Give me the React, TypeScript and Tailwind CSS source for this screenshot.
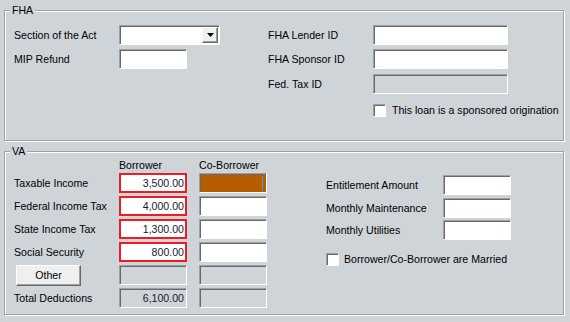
import React from "react";

const sunken =
  "h-[20px] border border-t-[#a0a0a0] border-l-[#a0a0a0] border-r-white border-b-white shadow-[inset_1px_1px_0_#696969]";

function WhiteField({ w }: { w: string }) {
  return <div className={`${sunken} bg-white ${w}`} />;
}

function DisabledField({ w, value }: { w: string; value?: string }) {
  return (
    <div
      className={`${sunken} bg-[#cfd4d8] ${w} flex items-center justify-end pr-[2px] text-[10.6px] leading-[13px] text-[#1a1a2e]`}
    >
      {value}
    </div>
  );
}

function RedField({ value }: { value: string }) {
  return (
    <div className="h-[20px] w-[68px] bg-white border-2 border-[#ed1c24] flex items-center justify-end pr-[1px] text-[10.6px] leading-[13px] text-[#1a1a2e]">
      {value}
    </div>
  );
}

function Checkbox() {
  return (
    <div className="w-[13px] h-[13px] bg-white border border-t-[#a0a0a0] border-l-[#a0a0a0] border-r-white border-b-white shadow-[inset_1px_1px_0_#696969]" />
  );
}

function Label({ w, children }: { w: string; children: React.ReactNode }) {
  return <div className={`${w} text-[10.6px] leading-[13px] text-black whitespace-nowrap`}>{children}</div>;
}

function GroupBox({
  title,
  h,
  children,
}: {
  title: string;
  h: string;
  children: React.ReactNode;
}) {
  return (
    <div className="relative w-[560px] border border-[#a0a0a0] shadow-[1px_1px_0_#ffffff]">
      <div className={`border-l border-t border-white ${h}`}>{children}</div>
      <span className="absolute left-[5px] top-[-7px] px-[2px] bg-[#cfd4d8] text-[10.6px] leading-[13px] text-black">
        {title}
      </span>
    </div>
  );
}

export default function App() {
  return (
    <div
      className="w-[570px] h-[322px] bg-[#cfd4d8] pt-[10px] pl-[4px] overflow-hidden"
      style={{ fontFamily: '"Liberation Sans", Arial, sans-serif' }}
    >
      <GroupBox title="FHA" h="h-[129px]">
        <div className="flex pl-[8px] pt-[13px]">
          {/* left column */}
          <div className="w-[254px] shrink-0 flex flex-col">
            <div className="flex items-center h-[20px]">
              <Label w="w-[105px]">Section of the Act</Label>
              <div className={`${sunken} bg-white w-[101px] flex items-center justify-end pr-[1px]`}>
                <div className="w-[16px] h-[16px] bg-[#f0f0f0] border border-t-white border-l-white border-r-[#696969] border-b-[#696969] shadow-[inset_-1px_-1px_0_#a0a0a0] flex items-center justify-center">
                  <svg width="7" height="4" viewBox="0 0 7 4">
                    <polygon points="0,0 7,0 3.5,4" fill="#000" />
                  </svg>
                </div>
              </div>
            </div>
            <div className="flex items-center h-[20px] mt-[4px]">
              <Label w="w-[105px]">MIP Refund</Label>
              <WhiteField w="w-[68px]" />
            </div>
          </div>
          {/* right column */}
          <div className="flex flex-col">
            <div className="flex items-center h-[20px]">
              <Label w="w-[105px]">FHA Lender ID</Label>
              <WhiteField w="w-[135px]" />
            </div>
            <div className="flex items-center h-[20px] mt-[4px]">
              <Label w="w-[105px]">FHA Sponsor ID</Label>
              <WhiteField w="w-[135px]" />
            </div>
            <div className="flex items-center h-[20px] mt-[5px]">
              <Label w="w-[105px]">Fed. Tax ID</Label>
              <DisabledField w="w-[135px]" />
            </div>
            <div className="flex items-center h-[13px] mt-[10px] pl-[105px]">
              <Checkbox />
              <span className="ml-[6px] text-[10.6px] leading-[13px] text-black whitespace-nowrap">
                This loan is a sponsored origination
              </span>
            </div>
          </div>
        </div>
      </GroupBox>

      <div className="mt-[10px]">
        <GroupBox title="VA" h="h-[162px]">
          <div className="flex pl-[8px] pt-[5px]">
            {/* left block */}
            <div className="flex flex-col w-[253px] shrink-0">
              <div className="flex items-center h-[14px] text-[10.6px] leading-[13px] text-black">
                <div className="w-[105px]" />
                <div className="w-[80px]">Borrower</div>
                <div>Co-Borrower</div>
              </div>
              <div className="flex flex-col gap-[3px] mt-[1px]">
                <div className="flex items-center h-[20px]">
                  <Label w="w-[105px]">Taxable Income</Label>
                  <RedField value="3,500.00" />
                  <div className={`${sunken} bg-[#b85c00] w-[68px] ml-[12px] flex items-center justify-end pr-[3px]`}>
                    <div className="w-[1px] h-[15px] bg-[#4a9be8]" />
                  </div>
                </div>
                <div className="flex items-center h-[20px]">
                  <Label w="w-[105px]">Federal Income Tax</Label>
                  <RedField value="4,000.00" />
                  <div className="ml-[12px]">
                    <WhiteField w="w-[68px]" />
                  </div>
                </div>
                <div className="flex items-center h-[20px]">
                  <Label w="w-[105px]">State Income Tax</Label>
                  <RedField value="1,300.00" />
                  <div className="ml-[12px]">
                    <WhiteField w="w-[68px]" />
                  </div>
                </div>
                <div className="flex items-center h-[20px]">
                  <Label w="w-[105px]">Social Security</Label>
                  <RedField value="800.00" />
                  <div className="ml-[12px]">
                    <WhiteField w="w-[68px]" />
                  </div>
                </div>
                <div className="flex items-center h-[20px]">
                  <div className="w-[105px] flex">
                    <button className="ml-[2px] w-[65px] h-[21px] bg-[#efefef] border border-t-white border-l-white border-r-[#696969] border-b-[#696969] shadow-[inset_-1px_-1px_0_#a0a0a0] text-[10.6px] leading-[13px] text-black flex items-center justify-center">
                      Other
                    </button>
                  </div>
                  <DisabledField w="w-[68px]" />
                  <div className="ml-[12px]">
                    <DisabledField w="w-[68px]" />
                  </div>
                </div>
                <div className="flex items-center h-[20px]">
                  <Label w="w-[105px]">Total Deductions</Label>
                  <DisabledField w="w-[68px]" value="6,100.00" />
                  <div className="ml-[12px]">
                    <DisabledField w="w-[68px]" />
                  </div>
                </div>
              </div>
            </div>
            {/* right block */}
            <div className="flex flex-col ml-[59px] pt-[17px]">
              <div className="flex items-center h-[20px]">
                <Label w="w-[117px]">Entitlement Amount</Label>
                <WhiteField w="w-[68px]" />
              </div>
              <div className="flex items-center h-[20px] mt-[3px]">
                <Label w="w-[117px]">Monthly Maintenance</Label>
                <WhiteField w="w-[68px]" />
              </div>
              <div className="flex items-center h-[20px] mt-[2px]">
                <Label w="w-[117px]">Monthly Utilities</Label>
                <WhiteField w="w-[68px]" />
              </div>
              <div className="flex items-center h-[13px] mt-[13px]">
                <Checkbox />
                <span className="ml-[5px] text-[10.6px] leading-[13px] text-black whitespace-nowrap">
                  Borrower/Co-Borrower are Married
                </span>
              </div>
            </div>
          </div>
        </GroupBox>
      </div>
    </div>
  );
}
